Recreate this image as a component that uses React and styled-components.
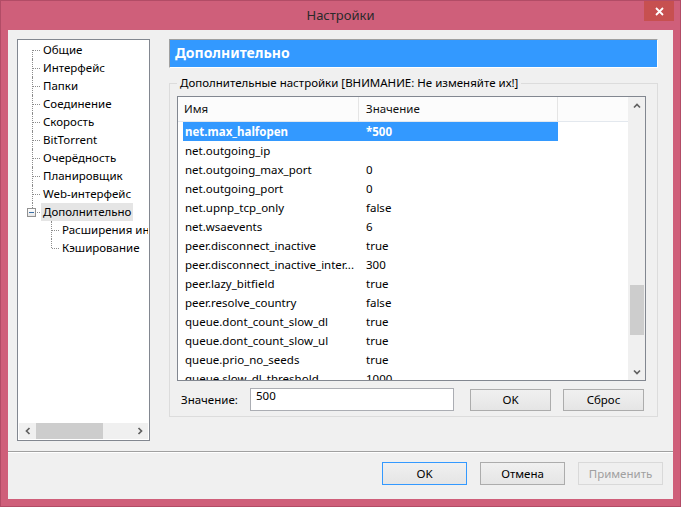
import React from "react";
import styled, { createGlobalStyle, css } from "styled-components";

const GlobalStyle = createGlobalStyle`
    html, body {
        margin: 0;
        padding: 0;
        background: #ffffff;
    }
    body {
        font-family: "Noto Sans", "Open Sans", sans-serif;
        font-size: 11.5px;
        color: #000;
    }
    * { box-sizing: border-box; }
`;

const Window = styled.div`
    width: 681px;
    height: 507px;
    background: #cf5f7a;
    border: 1px solid #b24c66;
    display: flex;
    flex-direction: column;
    padding: 0 7px 7px 7px;
`;

const TitleBar = styled.div`
    height: 29px;
    display: grid;
    grid-template-columns: 1fr auto 1fr;
    align-items: start;
`;

const Title = styled.div`
    grid-column: 2;
    font-size: 13px;
    line-height: 28px;
    color: #2a2a2a;
`;

const CloseButton = styled.div`
    grid-column: 3;
    justify-self: end;
    width: 30px;
    height: 20px;
    margin-right: -1px;
    background: #c75050;
    display: flex;
    align-items: center;
    justify-content: center;
`;

const Client = styled.div`
    flex: 1;
    background: #f0f0f0;
    display: flex;
    flex-direction: column;
`;

const MainArea = styled.div`
    display: flex;
    gap: 19px;
    padding: 9px 15px 0 9px;
`;

const Tree = styled.div`
    width: 133px;
    height: 402px;
    border: 1px solid #828790;
    background: #fff;
    padding: 1px;
    display: flex;
    flex-direction: column;
`;

const TreeRows = styled.div`
    flex: 1;
    overflow: hidden;
`;

const TreeRow = styled.div`
    position: relative;
    height: 18px;
    display: flex;
    align-items: center;
    overflow: hidden;
    padding-left: ${p => (p.$depth ? 41 : 22)}px;
    white-space: nowrap;
    &::before {
        content: "";
        position: absolute;
        left: ${p => (p.$depth ? 32 : 13)}px;
        top: ${p => (p.$first ? "9px" : "0")};
        bottom: ${p => (p.$last ? "9px" : "0")};
        border-left: 1px dotted #8c8c8c;
    }
    &::after {
        content: "";
        position: absolute;
        left: ${p => (p.$depth ? 33 : 14)}px;
        width: 7px;
        top: 9px;
        border-top: 1px dotted #8c8c8c;
    }
`;

const Expander = styled.span`
    position: absolute;
    left: 8px;
    top: 5px;
    width: 9px;
    height: 9px;
    border: 1px solid #919191;
    background: linear-gradient(#ffffff, #e6e6e6);
    z-index: 1;
    &::after {
        content: "";
        position: absolute;
        left: 1px;
        top: 3px;
        width: 5px;
        height: 1px;
        background: #3a6ea5;
    }
`;

const TreeLabel = styled.span`
    height: 18px;
    line-height: 18px;
    padding: 0 2px;
    min-width: 0;
    overflow: hidden;
    background: ${p => (p.$selected ? "#e5e5e5" : "transparent")};
`;

const HScroll = styled.div`
    height: 16px;
    display: flex;
    background: #f0f0f0;
`;

const ArrowBox = styled.div`
    width: 17px;
    flex: none;
    display: flex;
    align-items: center;
    justify-content: center;
`;

const HTrack = styled.div`
    flex: 1;
    display: flex;
`;

const HThumb = styled.div`
    width: 67px;
    background: #cdcdcd;
`;

const RightPanel = styled.div`
    width: 489px;
    display: flex;
    flex-direction: column;
`;

const PageHeader = styled.div`
    height: 29px;
    background: #3399ff;
    border-top: 1px solid #a0a0a0;
    border-left: 1px solid #a0a0a0;
    border-right: 1px solid #ffffff;
    border-bottom: 1px solid #ffffff;
    color: #fff;
    font-weight: bold;
    font-size: 14px;
    line-height: 26px;
    padding-left: 5px;
`;

const GroupBox = styled.fieldset`
    margin: 7px 0 0 0;
    min-width: 0;
    border: 1px solid #dcdcdc;
    padding: 5px 11px 5px 7px;
`;

const GroupTitle = styled.legend`
    padding: 0 3px;
    line-height: 16px;
`;

const TableBox = styled.div`
    height: 285px;
    border: 1px solid #828790;
    background: #fff;
    display: flex;
`;

const TableMain = styled.div`
    flex: 1;
    display: flex;
    flex-direction: column;
    overflow: hidden;
`;

const HeaderRow = styled.div`
    height: 25px;
    flex: none;
    display: grid;
    grid-template-columns: 181px 199px 1fr;
    background: #fcfcfc;
    border-bottom: 1px solid #e3e8ee;
`;

const HeaderCell = styled.div`
    padding-left: ${p => (p.$first ? 6 : 7)}px;
    line-height: 24px;
    border-right: ${p => (p.$last ? "none" : "1px solid #e5e5e5")};
    color: #111;
`;

const Body = styled.div`
    flex: 1;
    overflow: hidden;
`;

const Row = styled.div`
    height: 19px;
    width: 375px;
    margin-left: 5px;
    display: grid;
    grid-template-columns: 176px 199px;
    align-items: center;
    white-space: nowrap;
    ${p => p.$selected && css`
        background: #3399ff;
        color: #fff;
        font-weight: bold;
    `}
`;

const NameCell = styled.div`
    padding-left: 2px;
    overflow: hidden;
`;

const ValueCell = styled.div`
    padding-left: 7px;
`;

const VScroll = styled.div`
    width: 17px;
    flex: none;
    background: #f0f0f0;
    display: flex;
    flex-direction: column;
`;

const VArrow = styled.div`
    height: 17px;
    flex: none;
    display: flex;
    align-items: center;
    justify-content: center;
`;

const VTrack = styled.div`
    flex: 1;
    display: flex;
    flex-direction: column;
    align-items: center;
`;

const VThumb = styled.div`
    width: 14px;
    height: 50px;
    background: #cdcdcd;
`;

const EditRow = styled.div`
    display: flex;
    align-items: center;
    margin-top: 7px;
    height: 23px;
`;

const EditLabel = styled.div`
    width: 73px;
    padding-left: 4px;
`;

const ValueInput = styled.input`
    width: 204px;
    height: 23px;
    border: 1px solid #abadb3;
    padding: 0 5px 8px;
    font: inherit;
    background: #fff;
    margin: 0 16px 0 0;
    outline: none;
`;

const Button = styled.button`
    width: ${p => p.$width || 85}px;
    height: ${p => p.$height || 23}px;
    font: inherit;
    color: #000;
    border: 1px solid #acacac;
    background: linear-gradient(#f0f0f0, #e5e5e5);
    padding: 0;
    ${p => p.$default && css`
        border-color: #3399ff;
    `}
    ${p => p.disabled && css`
        color: #a0a0a0;
        border-color: #d9d9d9;
        background: #efefef;
    `}
`;

const Separator = styled.div`
    margin-top: 10px;
    border-top: 1px solid #a0a0a0;
    border-bottom: 1px solid #ffffff;
`;

const Footer = styled.div`
    display: flex;
    justify-content: flex-end;
    gap: 13px;
    padding: 9px 10px 0 0;
`;

const Chevron = ({ dir }) => {
    const pts = {
        up: "1,5.5 4,2.5 7,5.5",
        down: "1,2.5 4,5.5 7,2.5",
        left: "5.5,1 2.5,4 5.5,7",
        right: "2.5,1 5.5,4 2.5,7",
    }[dir];
    return (
        <svg width="8" height="8" viewBox="0 0 8 8">
            <polyline points={pts} fill="none" stroke="#606060" strokeWidth="1.7" />
        </svg>
    );
};

const treeItems = [
    { label: "Общие", depth: 0, first: true },
    { label: "Интерфейс", depth: 0 },
    { label: "Папки", depth: 0 },
    { label: "Соединение", depth: 0 },
    { label: "Скорость", depth: 0 },
    { label: "BitTorrent", depth: 0 },
    { label: "Очерёдность", depth: 0 },
    { label: "Планировщик", depth: 0 },
    { label: "Web-интерфейс", depth: 0 },
    { label: "Дополнительно", depth: 0, last: true, expander: true, selected: true },
    { label: "Расширения интерфейса", depth: 1 },
    { label: "Кэширование", depth: 1, last: true },
];

const rows = [
    ["net.max_halfopen", "*500", true],
    ["net.outgoing_ip", ""],
    ["net.outgoing_max_port", "0"],
    ["net.outgoing_port", "0"],
    ["net.upnp_tcp_only", "false"],
    ["net.wsaevents", "6"],
    ["peer.disconnect_inactive", "true"],
    ["peer.disconnect_inactive_inter...", "300"],
    ["peer.lazy_bitfield", "true"],
    ["peer.resolve_country", "false"],
    ["queue.dont_count_slow_dl", "true"],
    ["queue.dont_count_slow_ul", "true"],
    ["queue.prio_no_seeds", "true"],
    ["queue.slow_dl_threshold", "1000"],
];

export default function App() {
    return (
        <>
            <GlobalStyle />
            <Window>
                <TitleBar>
                    <Title>Настройки</Title>
                    <CloseButton>
                        <svg width="9" height="9" viewBox="0 0 9 9">
                            <path d="M1 1 L8 8 M8 1 L1 8" stroke="#fff" strokeWidth="1.8" />
                        </svg>
                    </CloseButton>
                </TitleBar>
                <Client>
                    <MainArea>
                        <Tree>
                            <TreeRows>
                                {treeItems.map(item => (
                                    <TreeRow
                                        key={item.label}
                                        $depth={item.depth}
                                        $first={item.first}
                                        $last={item.last}
                                    >
                                        {item.expander && <Expander />}
                                        <TreeLabel $selected={item.selected}>{item.label}</TreeLabel>
                                    </TreeRow>
                                ))}
                            </TreeRows>
                            <HScroll>
                                <ArrowBox><Chevron dir="left" /></ArrowBox>
                                <HTrack><HThumb /></HTrack>
                                <ArrowBox><Chevron dir="right" /></ArrowBox>
                            </HScroll>
                        </Tree>
                        <RightPanel>
                            <PageHeader>Дополнительно</PageHeader>
                            <GroupBox>
                                <GroupTitle>Дополнительные настройки [ВНИМАНИЕ: Не изменяйте их!]</GroupTitle>
                                <TableBox>
                                    <TableMain>
                                        <HeaderRow>
                                            <HeaderCell $first>Имя</HeaderCell>
                                            <HeaderCell>Значение</HeaderCell>
                                            <HeaderCell $last />
                                        </HeaderRow>
                                        <Body>
                                            {rows.map(([name, value, sel]) => (
                                                <Row key={name} $selected={sel}>
                                                    <NameCell>{name}</NameCell>
                                                    <ValueCell>{value}</ValueCell>
                                                </Row>
                                            ))}
                                        </Body>
                                    </TableMain>
                                    <VScroll>
                                        <VArrow><Chevron dir="up" /></VArrow>
                                        <VTrack>
                                            <VThumb style={{ marginTop: 171 }} />
                                        </VTrack>
                                        <VArrow><Chevron dir="down" /></VArrow>
                                    </VScroll>
                                </TableBox>
                                <EditRow>
                                    <EditLabel>Значение:</EditLabel>
                                    <ValueInput defaultValue="500" />
                                    <Button $width={81} $height={22}>OK</Button>
                                    <Button $width={81} $height={22} style={{ marginLeft: 12 }}>Сброс</Button>
                                </EditRow>
                            </GroupBox>
                        </RightPanel>
                    </MainArea>
                    <Separator />
                    <Footer>
                        <Button $default>OK</Button>
                        <Button>Отмена</Button>
                        <Button disabled>Применить</Button>
                    </Footer>
                </Client>
            </Window>
        </>
    );
}
